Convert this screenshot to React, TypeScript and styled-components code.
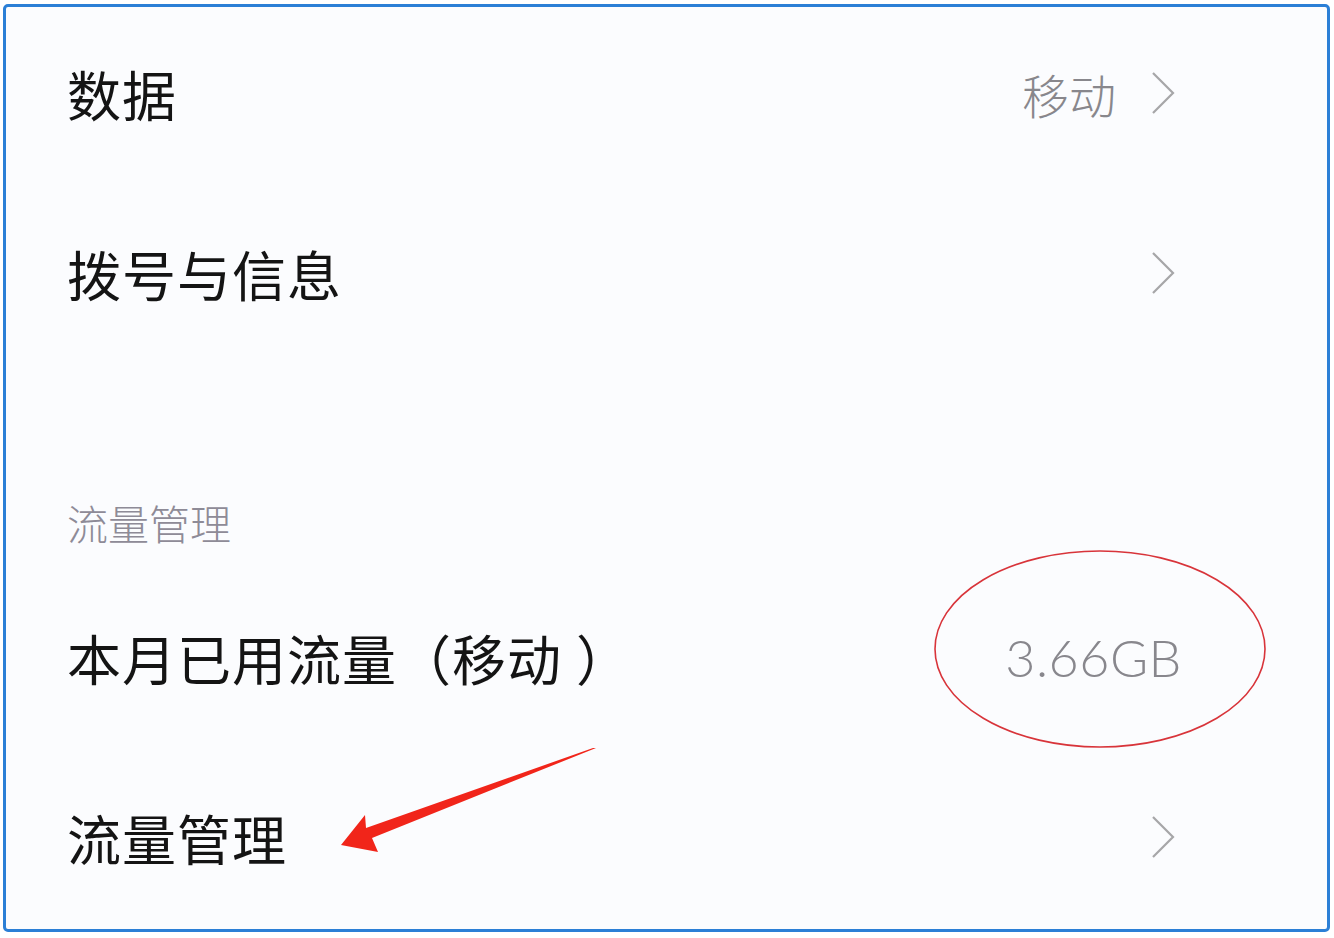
import React from "react";
import styled, { createGlobalStyle } from "styled-components";

const Global = createGlobalStyle`
  html, body { margin: 0; padding: 0; background: #ffffff; }
  body { font-family: "Noto Sans CJK SC", "Noto Sans", sans-serif; }
`;

const Frame = styled.div`
  position: relative;
  box-sizing: border-box;
  width: 1327px;
  height: 928px;
  margin: 4px 0 0 3px;
  border: 3px solid #2b7fd6;
  border-radius: 5px;
  background: #fbfcfe;
  display: flex;
  flex-direction: column;
  padding: 0 149px 0 61px;
`;

const Row = styled.div`
  box-sizing: border-box;
  height: 180px;
  padding-bottom: 8px;
  display: flex;
  align-items: center;
  justify-content: space-between;
  flex-shrink: 0;
`;

const Title = styled.span`
  font-size: 54px;
  color: #141414;
  letter-spacing: 1px;
`;

const Paren = styled.span`
  margin-left: 14px;
`;

const Right = styled.div`
  display: flex;
  align-items: center;
  gap: 34px;
`;

const Value = styled.span`
  font-size: 47px;
  color: #88878c;
  font-weight: 300;
`;

const Number = styled.span`
  position: relative;
  margin-right: -4px;
  font-family: "Lato", "Noto Sans", sans-serif;
  font-weight: 300;
  font-size: 52px;
  color: #88878d;
  letter-spacing: 0.5px;
`;

const Chevron = styled.svg`
  width: 28px;
  height: 44px;
  display: block;
`;

const SectionHeader = styled.div`
  box-sizing: border-box;
  margin-top: 128px;
  height: 60px;
  padding-bottom: 6px;
  display: flex;
  align-items: center;
  font-size: 41px;
  color: #8e8b97;
  font-weight: 300;
  flex-shrink: 0;
`;

const Spacer = styled.div`
  height: 16px;
  flex-shrink: 0;
`;

const Ellipse = styled.svg`
  position: absolute;
  left: calc(50% - 161px);
  top: calc(50% - 108px);
  width: 334px;
  height: 200px;
  pointer-events: none;
`;

const Arrow = styled.svg`
  position: absolute;
  left: 0;
  top: 0;
  width: 1327px;
  height: 928px;
  pointer-events: none;
`;

const Chev = () => (
  <Chevron viewBox="0 0 28 44">
    <polyline
      points="3,2 23,22 3,42"
      fill="none"
      stroke="#a6a6a8"
      strokeWidth="2.2"
      strokeLinejoin="miter"
    />
  </Chevron>
);

export default function App() {
  return (
    <>
      <Global />
      <Frame>
        <Row>
          <Title>数据</Title>
          <Right>
            <Value>移动</Value>
            <Chev />
          </Right>
        </Row>
        <Row>
          <Title>拨号与信息</Title>
          <Right>
            <Chev />
          </Right>
        </Row>
        <SectionHeader>流量管理</SectionHeader>
        <Spacer />
        <Row>
          <Title>
            本月已用流量（移动<Paren>）</Paren>
          </Title>
          <Right>
            <Number>
              3.66GB
              <Ellipse viewBox="0 0 334 200">
                <ellipse
                  cx="167"
                  cy="100"
                  rx="165"
                  ry="98"
                  fill="none"
                  stroke="#d8343a"
                  strokeWidth="1.6"
                />
              </Ellipse>
            </Number>
          </Right>
        </Row>
        <Row>
          <Title>流量管理</Title>
          <Right>
            <Chev />
          </Right>
        </Row>
        <Arrow viewBox="0 0 1327 928">
          <polygon
            points="335,838 359,808 360,821 587,741 590,741 366,831 372,845"
            fill="#f1251a"
          />
        </Arrow>
      </Frame>
    </>
  );
}
